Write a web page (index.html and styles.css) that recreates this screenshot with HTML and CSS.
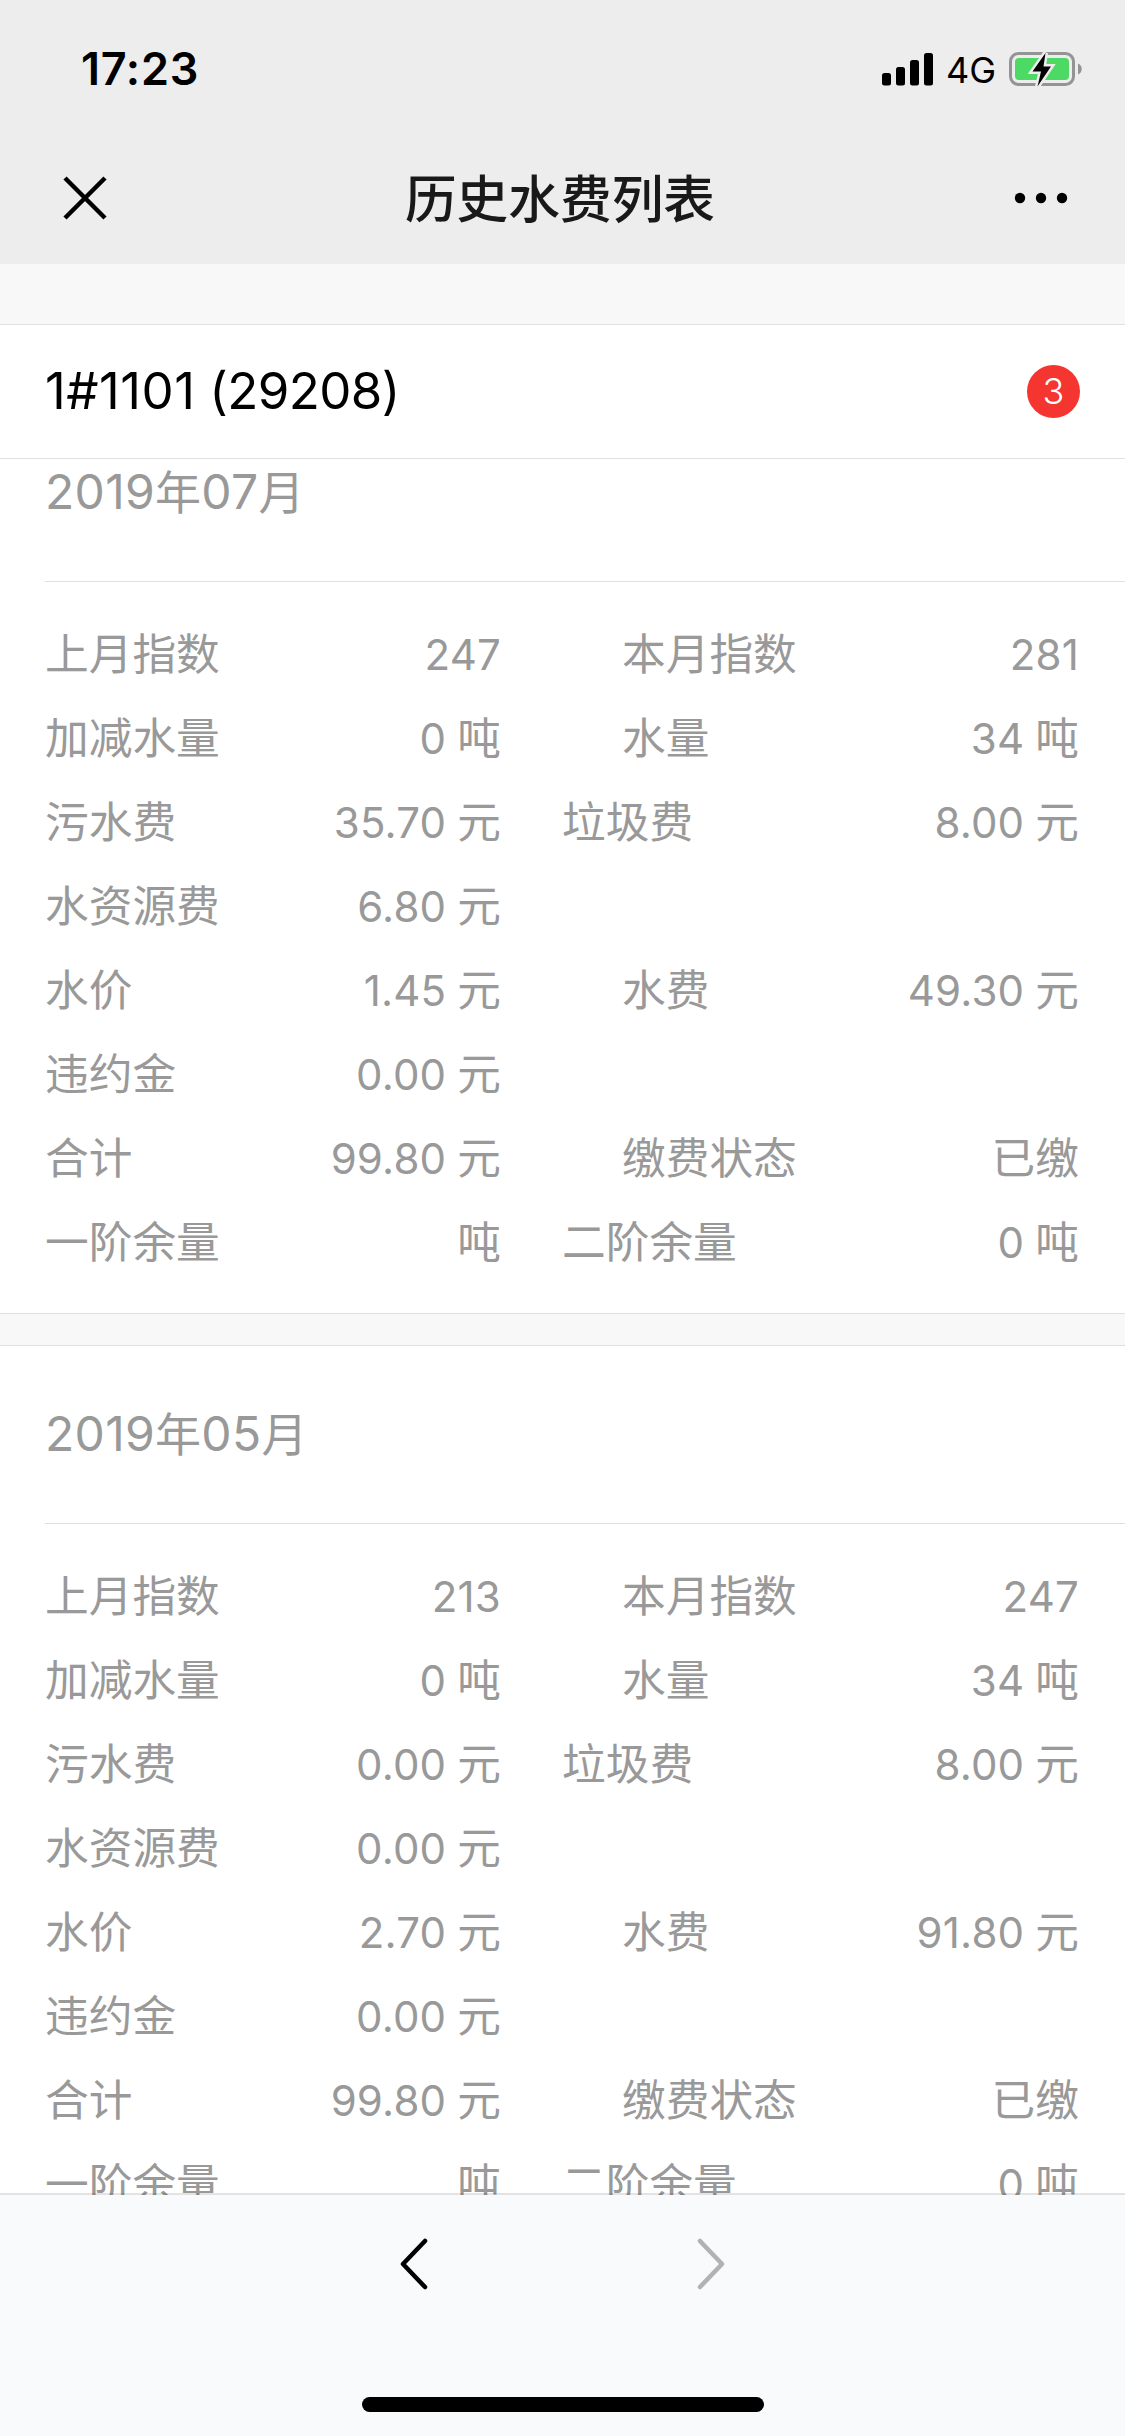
FILE: index.html
```html
<!DOCTYPE html>
<html lang="zh-CN">
<head>
<meta charset="utf-8">
<title>历史水费列表</title>
<link rel="stylesheet" href="styles.css">
</head>
<body>
<div class="screen">
  <header class="topbar">
    <div class="status">
      <span class="time">17:23</span>
      <div class="status-right">
        <svg class="signal" width="52" height="33" viewBox="0 0 52 33"><rect x="0" y="20" width="9" height="12.500" rx="2.500"/><rect x="14" y="14" width="9" height="18.500" rx="2.500"/><rect x="28" y="7" width="9" height="25.500" rx="2.500"/><rect x="42" y="0" width="9" height="32.500" rx="2.500"/></svg>
        <span class="network">4G</span>
        <svg class="battery" width="74" height="36" viewBox="0 0 74 36"><rect x="1.500" y="2.500" width="63" height="31" rx="8" fill="none" stroke="#949494" stroke-width="3"/><rect x="6" y="7" width="54" height="22" rx="4" fill="#4cd964"/><path d="M69 12.500c5 2 5 9 0 11z" fill="#949494"/><path d="M36.500 2 23.500 20.500h8.500l-3.500 15L42 15.500h-7.500z" fill="#000" stroke="#ededed" stroke-width="5" paint-order="stroke"/></svg>
      </div>
    </div>
    <div class="titlebar">
      <svg class="close" width="46" height="46" viewBox="0 0 46 46"><path d="M3 3 43 43M43 3 3 43"/></svg>
      <h1 class="title">历史水费列表</h1>
      <svg class="more" width="54" height="12" viewBox="0 0 54 12"><circle cx="6" cy="6" r="5.200"/><circle cx="27" cy="6" r="5.200"/><circle cx="48" cy="6" r="5.200"/></svg>
    </div>
  </header>

  <section class="account">
    <span class="account-name"><span class="unit">1#1101</span> (29208)</span>
    <span class="badge">3</span>
  </section>

  <main class="list">
    <article class="card card-scrolled">
      <h2 class="month"><span class="month-num">2019</span>年<span class="month-num">07</span>月</h2>
      <div class="rows">
        <div class="item"><span>上月指数</span><span class="num">247</span></div>
        <div class="item indent"><span>本月指数</span><span class="num">281</span></div>
        <div class="item"><span>加减水量</span><span><b class="num">0</b>吨</span></div>
        <div class="item indent"><span>水量</span><span><b class="num">34</b>吨</span></div>
        <div class="item"><span>污水费</span><span><b class="num">35.70</b>元</span></div>
        <div class="item"><span>垃圾费</span><span><b class="num">8.00</b>元</span></div>
        <div class="item wide"><span>水资源费</span><span><b class="num">6.80</b>元</span></div>
        <div class="item"><span>水价</span><span><b class="num">1.45</b>元</span></div>
        <div class="item indent"><span>水费</span><span><b class="num">49.30</b>元</span></div>
        <div class="item wide"><span>违约金</span><span><b class="num">0.00</b>元</span></div>
        <div class="item"><span>合计</span><span><b class="num">99.80</b>元</span></div>
        <div class="item indent"><span>缴费状态</span><span>已缴</span></div>
        <div class="item"><span>一阶余量</span><span>吨</span></div>
        <div class="item"><span>二阶余量</span><span><b class="num">0</b>吨</span></div>
      </div>
    </article>

    <article class="card">
      <h2 class="month"><span class="month-num">2019</span>年<span class="month-num">05</span>月</h2>
      <div class="rows">
        <div class="item"><span>上月指数</span><span class="num">213</span></div>
        <div class="item indent"><span>本月指数</span><span class="num">247</span></div>
        <div class="item"><span>加减水量</span><span><b class="num">0</b>吨</span></div>
        <div class="item indent"><span>水量</span><span><b class="num">34</b>吨</span></div>
        <div class="item"><span>污水费</span><span><b class="num">0.00</b>元</span></div>
        <div class="item"><span>垃圾费</span><span><b class="num">8.00</b>元</span></div>
        <div class="item wide"><span>水资源费</span><span><b class="num">0.00</b>元</span></div>
        <div class="item"><span>水价</span><span><b class="num">2.70</b>元</span></div>
        <div class="item indent"><span>水费</span><span><b class="num">91.80</b>元</span></div>
        <div class="item wide"><span>违约金</span><span><b class="num">0.00</b>元</span></div>
        <div class="item"><span>合计</span><span><b class="num">99.80</b>元</span></div>
        <div class="item indent"><span>缴费状态</span><span>已缴</span></div>
        <div class="item"><span>一阶余量</span><span>吨</span></div>
        <div class="item"><span>二阶余量</span><span><b class="num">0</b>吨</span></div>
      </div>
    </article>
  </main>

  <footer class="toolbar">
    <nav class="history">
      <svg width="30" height="54" viewBox="0 0 30 54"><path d="M26 4 4 27 26 50" stroke="#000"/></svg>
      <svg width="30" height="54" viewBox="0 0 30 54"><path d="M4 4 26 27 4 50" stroke="#b1b2b3"/></svg>
    </nav>
    <div class="home-indicator"></div>
  </footer>
</div>
</body>
</html>
```
FILE: styles.css
```css
* {
  box-sizing: border-box;
}

body {
  margin: 0;
  font-family: Inter, "Noto Sans CJK SC", sans-serif;
}

.screen {
  display: flex;
  flex-direction: column;
  width: 1125px;
  height: 2436px;
  overflow: hidden;
  background: #f8f8f8;
}

svg {
  display: block;
  flex: none;
}

/* Status bar and page title */
.topbar {
  flex: none;
  height: 264px;
  background: #ededed;
}

.status {
  display: flex;
  justify-content: space-between;
  align-items: center;
  height: 132px;
  padding: 6px 42px 0 81px;
}

.time {
  font-size: 45px;
  font-weight: 600;
  line-height: 54px;
  letter-spacing: 0.7px;
}

.status-right {
  display: flex;
  align-items: center;
}

.network {
  width: 63px;
  margin-left: 12px;
  padding-top: 2px;
  font-size: 36px;
  font-weight: 400;
  line-height: 40px;
}

.titlebar {
  display: flex;
  justify-content: space-between;
  align-items: center;
  height: 132px;
  padding: 0 57px 0 62px;
}

.close path {
  fill: none;
  stroke: #000;
  stroke-width: 4.5;
}

.title {
  margin: 0 2px 4px 0;
  font-family: "Noto Sans CJK SC", sans-serif;
  font-size: 51.7px;
  font-weight: 500;
  line-height: 128px;
  color: #191919;
}

/* Account header */
.account {
  display: flex;
  flex: none;
  justify-content: space-between;
  align-items: center;
  height: 135px;
  margin-top: 60px;
  padding: 0 45px;
  border-top: 1px solid #e0e0e0;
  border-bottom: 1px solid #e0e0e0;
  background: #fff;
}

.account-name {
  padding-bottom: 2px;
  font-size: 51px;
  line-height: 72px;
  letter-spacing: -0.6px;
}

.unit {
  letter-spacing: 0.5px;
}

.badge {
  width: 53px;
  height: 53px;
  border-radius: 50%;
  background: #f43530;
  color: #fff;
  font-size: 36px;
  font-weight: 350;
  line-height: 53px;
  text-align: center;
}

/* Bills */
.list {
  flex: 1;
  min-height: 0;
  overflow: hidden;
}

.card {
  margin-bottom: 31px;
  border-top: 1px solid #e0e0e0;
  border-bottom: 1px solid #e0e0e0;
  background: #fff;
  color: #999;
}

.card-scrolled {
  margin-top: -56px;
}

.month {
  height: 178px;
  margin: 0 0 0 45px;
  border-bottom: 1px solid #e0e0e0;
  font-size: 46px;
  font-weight: 400;
  line-height: 176px;
  letter-spacing: 0.3px;
}

.month-num {
  font-size: 48px;
}

.rows {
  display: grid;
  grid-template-columns: 456px 517px;
  grid-auto-rows: 84px;
  column-gap: 61px;
  padding: 31px 46px 28px 45px;
  font-size: 43.7px;
  line-height: 84px;
}

.item {
  display: flex;
  justify-content: space-between;
}

.indent {
  padding-left: 60px;
}

.wide {
  grid-column: 1;
}

.wide + .item {
  grid-column-start: 1;
}

.num {
  font-size: 42px;
  font-weight: 400;
  letter-spacing: 0.2px;
}

b.num {
  margin-right: 11px;
}

/* Browser toolbar */
.toolbar {
  position: relative;
  flex: none;
  display: flex;
  flex-direction: column;
  justify-content: space-between;
  align-items: center;
  height: 243px;
  margin-top: -2px;
  padding: 42px 0 24px;
  border-top: 2px solid rgba(0, 0, 0, 0.11);
  background: #f9fafc padding-box;
}

.history {
  display: flex;
  gap: 267px;
}

.history path {
  fill: none;
  stroke-width: 4.5;
  stroke-linecap: round;
  stroke-linejoin: round;
}

.home-indicator {
  width: 402px;
  height: 15px;
  border-radius: 8px;
  background: #000;
}
```
